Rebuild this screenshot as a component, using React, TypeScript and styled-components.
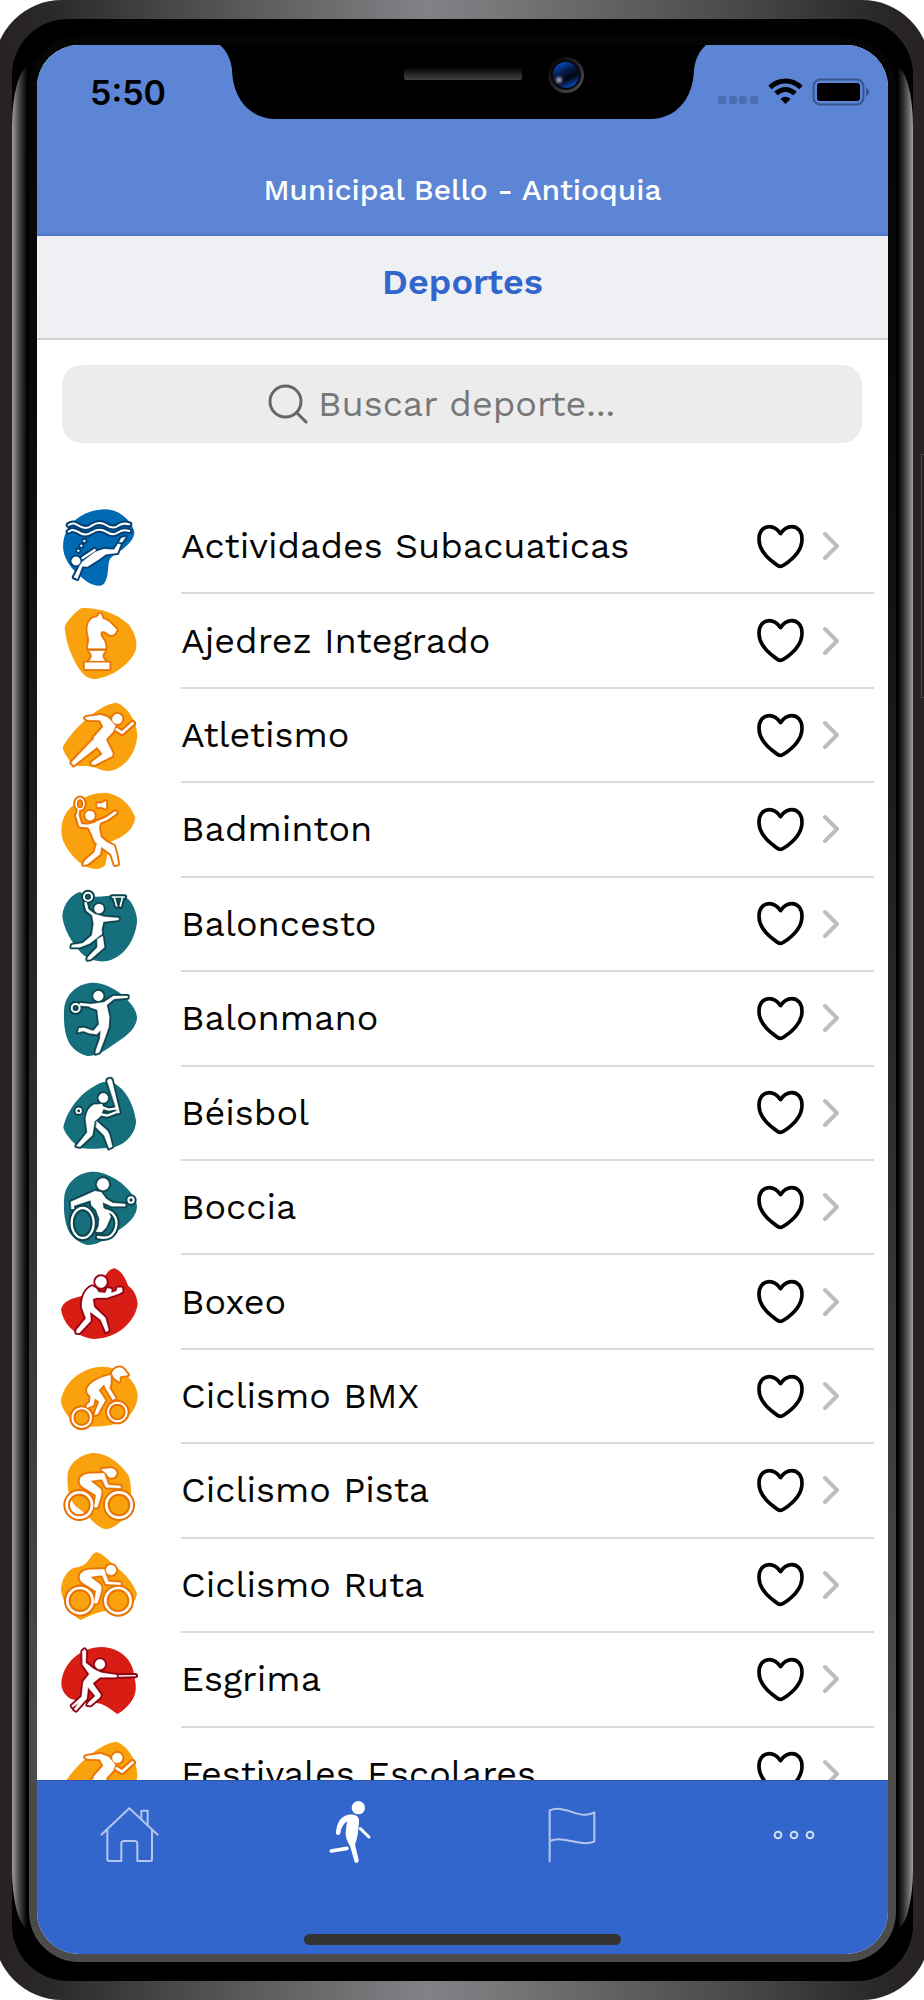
import React from "react";
import styled, { createGlobalStyle } from "styled-components";

const GlobalStyle = createGlobalStyle`
  *, *::before, *::after { box-sizing: border-box; }
  body {
    margin: 0;
    background: #fff;
    font-family: "Work Sans", Inter, "Liberation Sans", sans-serif;
    color: #050505;
  }
`;

/* ---------- Phone shell ---------- */

const Page = styled.div`
  display: flex;
  height: 100vh;
  min-height: 900px;
  overflow: hidden;
`;

const Frame = styled.div`
  position: relative;
  flex: 1;
  display: flex;
  min-width: 0;
  margin: 0 -6px;
  padding: 19px 17px 19px 18px;
  border-radius: 68px;
  background: linear-gradient(
    to right,
    #262223 0%,
    #2b2829 6%,
    #4a4748 19%,
    #5a5a5b 27%,
    #808285 46%,
    #79797c 53%,
    #5a5a5b 70%,
    #4a4748 80%,
    #2b2829 94%,
    #262223 100%
  );
`;

const SideButton = styled.span`
  position: absolute;
  top: 454px;
  right: 0;
  width: 9px;
  height: 244px;
  border: 1px solid #4b4849;
`;

const Bezel = styled.div`
  position: relative;
  flex: 1;
  display: flex;
  min-width: 0;
  padding: 18px 17px 19px;
  border-radius: 56px;
  background: #000;

  &::before,
  &::after {
    content: "";
    position: absolute;
    top: 48px;
    bottom: 52px;
    width: 17px;
  }
  &::before {
    left: 0;
    border-radius: 17px 0 0 17px / 60px 0 0 60px;
    background: linear-gradient(to right, #a0a0a0, #6a6a6a 25%, #333 55%, #000 90%);
  }
  &::after {
    right: 0;
    border-radius: 0 17px 17px 0 / 0 60px 60px 0;
    background: linear-gradient(to left, #a0a0a0, #6a6a6a 25%, #333 55%, #000 90%);
  }
`;

const Rim = styled.div`
  flex: 1;
  display: flex;
  min-width: 0;
  padding: 8px;
  border-radius: 50px;
  background: linear-gradient(#050505, #0a0a0a 20%, #2c2c2c 55%, #4b4b4b 88%);
`;

const Screen = styled.div`
  flex: 1;
  display: flex;
  flex-direction: column;
  min-width: 0;
  overflow: hidden;
  border-radius: 42px;
  background: #fff;
`;

/* ---------- Header ---------- */

const Header = styled.header`
  flex: none;
  background: #5c85d6;
  border-bottom: 2px solid #4f77c8;
`;

const StatusBar = styled.div`
  display: grid;
  grid-template-columns: 1fr auto 1fr;
`;

const Side = styled.div<{ $end?: boolean }>`
  display: flex;
  align-items: center;
  justify-content: ${(p) => (p.$end ? "flex-end" : "flex-start")};
  height: 94px;
  padding: ${(p) => (p.$end ? "0 18px 0 0" : "0 0 0 53px")};
`;

const Clock = styled.time`
  font-family: Inter, "Liberation Sans", sans-serif;
  font-size: 34px;
  font-weight: 600;
  color: #000;
`;

const Place = styled.p`
  margin: 0;
  padding: 33px 0 26px;
  font-size: 30px;
  font-weight: 500;
  line-height: 36px;
  text-align: center;
  color: #fff;
`;

const TitleBar = styled.div`
  flex: none;
  padding: 26px 0 36px;
  background: #eff0f4;
  border-bottom: 2px solid #d0d0d5;
`;

const Title = styled.h1`
  margin: 0;
  font-size: 36px;
  font-weight: 600;
  line-height: 40px;
  text-align: center;
  color: #3366cc;
`;

/* ---------- Search ---------- */

const SearchBox = styled.label`
  flex: none;
  display: flex;
  align-items: center;
  justify-content: center;
  gap: 10px;
  height: 78px;
  margin: 25px 26px 57px 25px;
  border-radius: 20px;
  background: #ececec;
`;

const SearchInput = styled.input`
  width: 338px;
  padding: 0;
  border: 0;
  outline: 0;
  background: transparent;
  font: inherit;
  font-size: 36px;
  line-height: 44px;
  color: #050505;

  &::placeholder {
    color: #777;
    opacity: 1;
  }
`;

/* ---------- List ---------- */

const Scroller = styled.main`
  flex: 1;
  min-height: 0;
  overflow: hidden;
`;

const List = styled.ul`
  display: grid;
  grid-auto-rows: 1fr;
  height: 1322px;
  margin: 0;
  padding: 0 14px 0 23px;
  list-style: none;
`;

const Row = styled.li`
  display: flex;
  align-items: center;
  gap: 41px;
`;

const RowBody = styled.div`
  flex: 1;
  display: flex;
  align-items: center;
  gap: 17px;
  height: 100%;
  padding-right: 35px;
  border-bottom: 2px solid #dadadd;
`;

const SportLink = styled.a`
  flex: 1;
  font-size: 36px;
  line-height: 44px;
  color: inherit;
  text-decoration: none;
`;

const LikeButton = styled.button`
  display: flex;
  padding: 0;
  border: 0;
  background: none;
  cursor: pointer;
`;

/* ---------- Tab bar ---------- */

const TabBar = styled.nav`
  flex: none;
  display: flex;
  flex-direction: column;
  align-items: center;
  justify-content: space-between;
  height: 174px;
  padding: 19px 0 9px;
  background: #3366cc;
  border-top: 1px solid #2b55a8;
`;

const Tabs = styled.div`
  align-self: stretch;
  display: flex;
  justify-content: space-between;
  padding: 0 62px 0 60px;
`;

const Tab = styled.a`
  display: flex;
`;

const HomeIndicator = styled.span`
  width: 317px;
  height: 11px;
  border-radius: 6px;
  background: #333;
`;

/* ---------- Sport pictograms ---------- */

type Shape = { d: string; w?: number };

type Palette = "blue" | "amber" | "teal" | "red";

const palettes: Record<Palette, { blob: string; edge: string }> = {
  blue: { blob: "#0069b4", edge: "#003f74" },
  amber: { blob: "#f9a20d", edge: "#e87200" },
  teal: { blob: "#166f7c", edge: "#0b434e" },
  red: { blob: "#d81e14", edge: "#930012" },
};

const oval = (x: number, y: number, rx: number, ry = rx) =>
  `M${x - rx} ${y}a${rx} ${ry} 0 1 0 ${rx * 2} 0a${rx} ${ry} 0 1 0 ${-rx * 2} 0Z`;

type Sport = {
  name: string;
  tone: Palette;
  top: number;
  blob: string;
  figure: Shape[];
};

const runner = {
  tone: "amber" as Palette,
  top: 646,
  blob: "M350 666C385 680 412 725 412 765C408 820 370 868 325 871C300 871 290 858 260 856C230 858 215 852 205 835C192 815 186 805 190 795C215 755 250 720 285 695C310 675 335 667 350 666Z",
  figure: [
    { d: oval(352, 715, 15) },
    { d: "M255 712L260 709L302 703L325 711L346 735L340 752L318 776L322 786L338 818L336 826L285 852L274 851L276 844L308 820L290 797L280 786L282 770L310 738L300 719L262 717Z" },
    { d: "M350 746L366 756L398 728", w: 8 },
    { d: "M278 778L214 846L221 854L290 800Z" },
  ],
};

const sports: Sport[] = [
  {
    name: "Actividades Subacuaticas",
    tone: "blue",
    top: 80,
    blob: "M318 87C350 87 388 112 401 148C408 165 395 185 370 205C345 222 328 228 326 250C322 275 325 290 312 310C300 322 275 315 255 300C230 280 195 250 190 210C186 175 200 140 225 120C250 98 285 87 318 87Z",
    figure: [
      { d: "M206 134C220 124 228 132 240 138C255 146 265 144 275 136C290 126 305 126 318 134C330 142 345 144 355 136C365 129 378 129 388 132", w: 6 },
      { d: "M206 154C220 144 228 152 240 158C255 166 265 164 275 156C290 146 305 146 318 154C330 162 345 164 355 156C365 149 378 149 388 152", w: 6 },
      { d: oval(228, 242, 13) },
      { d: oval(235, 211, 3) },
      { d: oval(244, 196, 3) },
      { d: oval(253, 182, 3) },
      { d: "M247 244L285 215L312 206L342 208L354 190L362 192L352 218L318 222L295 238L262 259L247 258L232 296L226 292L238 258Z" },
      { d: "M248 233L284 209", w: 7 },
      { d: "M224 290L238 264", w: 5 },
      { d: "M358 184L364 173L377 170L366 186Z" },
    ],
  },
  {
    name: "Ajedrez Integrado",
    tone: "amber",
    top: 363,
    blob: "M248 380C300 382 350 395 385 430C405 455 412 480 408 505C395 550 330 590 288 594C262 594 250 582 235 560C210 520 198 480 194 440C194 425 235 382 248 380Z",
    figure: [
      { d: "M303 400L308 414C325 417 337 432 350 446L345 456C338 464 330 462 325 458L312 450C298 450 298 462 311 478C317 488 316 495 316 502L264 502C264 490 269 485 267 470C260 445 262 425 275 414C283 409 295 412 297 400Z" },
      { d: "M268 510H315C305 520 305 530 315 539H268C278 530 278 520 268 510Z" },
      { d: "M255 545H328V564H255Z" },
    ],
  },
  { name: "Atletismo", ...runner },
  {
    name: "Badminton",
    tone: "amber",
    top: 929,
    blob: "M318 937C350 940 390 965 406 1012C400 1050 370 1070 330 1085C320 1100 325 1125 315 1155C300 1172 275 1168 250 1155C215 1130 185 1090 184 1055C184 1020 195 995 220 975C250 945 290 937 318 937Z",
    figure: [
      { d: oval(240, 970, 12, 16), w: 5 },
      { d: "M236 988L232 1008", w: 5 },
      { d: "M232 1005L241 1035L272 1038", w: 8 },
      { d: oval(270, 1006, 14) },
      { d: "M290 1027L320 1015L346 997", w: 8 },
      { d: "M262 1034L300 1023L297 1045L302 1070L318 1084L342 1096L350 1125L354 1152L344 1154L334 1122L308 1102L285 1085L275 1060Z" },
      { d: "M290 1092L304 1096L300 1122L262 1152L250 1153L254 1142L284 1115Z" },
      { d: "M292 969L303 970L318 962V985L304 979L293 980Z" },
    ],
  },
  {
    name: "Baloncesto",
    tone: "teal",
    top: 43,
    blob: "M240 64C265 80 290 80 320 76C345 72 370 72 388 88C405 110 412 135 411 155C405 210 370 265 315 272C275 275 245 255 230 230C205 200 188 160 187 135C190 100 215 70 240 64Z",
    figure: [
      { d: oval(264, 78, 12), w: 6 },
      { d: "M257 98L262 118L280 132", w: 8 },
      { d: oval(297, 114, 14) },
      { d: "M276 128L312 138L356 142V148L310 153L305 175L306 190L270 218L240 230L214 230L216 223L248 218L276 194L281 160Z" },
      { d: "M292 206L308 196L313 230L272 266L262 267L264 259L292 230Z" },
      { d: "M337 79H373", w: 5 },
      { d: "M343 82L350 106", w: 5 },
      { d: "M367 82L361 106", w: 5 },
    ],
  },
  {
    name: "Balonmano",
    tone: "teal",
    top: 326,
    blob: "M280 337C310 338 340 352 365 372C390 395 412 420 411 445C405 485 365 505 330 530C310 545 285 558 262 557C235 550 210 530 202 505C192 480 190 440 193 410C200 365 240 337 280 337Z",
    figure: [
      { d: oval(227, 413, 12), w: 6 },
      { d: "M242 402L275 405", w: 8 },
      { d: oval(295, 377, 15) },
      { d: "M270 402L312 396L340 377L383 377V382L342 386L320 404L328 440L326 470L312 510L298 546L287 550L287 542L300 505L302 480L290 492L268 489L250 482L234 486L237 474L252 472L280 482L297 462L292 418L270 411Z" },
    ],
  },
  {
    name: "Béisbol",
    tone: "teal",
    top: 610,
    blob: "M325 633C365 638 400 690 408 750C408 790 375 822 340 830C300 835 265 836 240 832C215 815 192 785 190 770C200 720 240 670 280 648C295 638 310 632 325 633Z",
    figure: [
      { d: oval(236, 720, 7), w: 5 },
      { d: oval(310, 682, 14) },
      { d: "M322 632C322 623 334 622 336 630L359 726L353 728Z" },
      { d: "M302 708L325 717L350 713", w: 7 },
      { d: "M298 730L322 735L350 724", w: 7 },
      { d: "M282 702L306 700L310 716L300 738L284 752L277 794L240 828L229 826L262 785L257 745C260 722 268 708 282 702Z" },
      { d: "M290 752L322 780L328 792L337 828L327 833L313 795L288 770Z" },
    ],
  },
  {
    name: "Boccia",
    tone: "teal",
    top: 893,
    blob: "M280 904C310 905 340 919 365 939C390 962 412 987 411 1012C405 1052 365 1072 330 1097C310 1112 285 1125 262 1124C235 1117 210 1097 202 1072C192 1047 190 1007 193 977C200 932 240 904 280 904Z",
    figure: [
      { d: oval(248, 1058, 33, 45), w: 7 },
      { d: "M312 1020C340 1020 352 1045 349 1065C344 1095 325 1108 294 1100", w: 7 },
      { d: oval(309, 942, 18) },
      { d: "M213 994L285 962L304 966L318 985L338 998L376 1001V1008L335 1008L308 996L310 1012L326 1025L332 1040L318 1072L305 1085L288 1084L296 1068L298 1045L288 1018L274 1005L272 990L222 1006L222 1016L214 1016Z" },
      { d: oval(393, 989, 8), w: 6 },
    ],
  },
  {
    name: "Boxeo",
    tone: "red",
    top: 36,
    blob: "M342 52C365 58 375 80 385 105C400 115 412 135 413 160C405 215 350 262 285 264C235 262 190 225 183 175C190 150 215 142 245 135C275 120 300 90 315 75C322 62 332 54 342 52Z",
    figure: [
      { d: oval(303, 93, 17) },
      { d: "M276 106L288 112L296 124L316 126L322 112L334 114L334 126L350 120L352 110L366 110L367 122L356 128L320 140L290 140L278 144L282 168L316 200L326 238L318 243L302 206L270 182L272 210L238 246L229 245L230 236L258 202L246 170C244 140 256 114 276 106Z" },
    ],
  },
  {
    name: "Ciclismo BMX",
    tone: "amber",
    top: 320,
    blob: "M305 349C360 348 410 390 413 435C412 480 380 515 330 525C290 532 240 532 215 510C195 490 182 465 183 450C190 400 240 352 305 349Z",
    figure: [
      { d: oval(245, 502, 28), w: 6 },
      { d: oval(352, 485, 28), w: 6 },
      { d: "M336 370C340 352 362 346 372 358L384 374L360 378L358 394L342 382Z" },
      { d: "M262 418C264 400 300 380 332 375L332 398L328 414L347 444L338 448L318 415L312 402L296 420L316 450L292 492L284 494L286 484L298 454L284 444L280 464L262 472L260 465L270 456L272 436C264 432 261 426 262 418Z" },
    ],
  },
  {
    name: "Ciclismo Pista",
    tone: "amber",
    top: 603,
    blob: "M285 609C325 612 360 640 385 675C395 700 392 730 395 760C385 800 355 830 320 838C290 835 270 800 235 775C205 755 200 710 203 670C210 635 250 608 285 609Z",
    figure: [
      { d: oval(238, 765, 38), w: 8 },
      { d: oval(357, 765, 38), w: 8 },
      { d: "M304 658L332 655C345 656 352 665 348 675C340 687 325 685 320 672Z" },
      { d: "M240 700C236 680 250 672 270 671L312 670L325 705L362 708V714L318 712L306 688L270 692L300 715C306 722 304 730 302 740L292 772L283 772L288 735L245 708Z" },
    ],
  },
  {
    name: "Ciclismo Ruta",
    tone: "amber",
    top: 886,
    blob: "M290 905C310 910 320 925 345 945C375 970 400 995 411 1030C405 1065 375 1080 340 1078C300 1080 270 1095 242 1108C215 1095 185 1050 183 1015C185 985 200 962 220 952C245 950 260 940 270 922C278 910 285 905 290 905Z",
    figure: [
      { d: oval(240, 1050, 38), w: 8 },
      { d: oval(354, 1050, 38), w: 8 },
      { d: oval(333, 958, 15) },
      { d: "M240 986C236 968 250 958 270 957L312 956L325 993L362 996V1002L318 1000L306 974L270 978L300 1001C306 1008 304 1016 302 1026L292 1058L283 1058L288 1021L245 994Z" },
    ],
  },
  {
    name: "Esgrima",
    tone: "red",
    top: 0,
    blob: "M305 21C360 22 400 60 403 110C410 140 408 155 402 170C390 195 370 212 352 222C335 212 320 195 295 190C265 185 240 185 215 178C195 168 184 150 184 130C188 70 240 22 305 21Z",
    figure: [
      { d: oval(300, 73, 15) },
      { d: "M247 34L254 28L258 34L257 68L282 88L304 98L350 105V112L300 112L278 130L302 164L300 172L272 196L262 195L265 188L286 168L264 142L260 176L228 212L222 208L236 188L218 202L215 197L245 170L250 125L268 102L248 74Z" },
      { d: "M357 108L406 107", w: 4 },
    ],
  },
  { name: "Festivales Escolares", ...runner },
];

function SportIcon({ sport }: { sport: Sport }) {
  const { blob, edge } = palettes[sport.tone];
  return (
    <svg width="80" height="80" viewBox={`180 ${sport.top} 240 240`} aria-hidden="true">
      <path d={sport.blob} fill={blob} />
      <g stroke={edge} strokeLinejoin="round" strokeLinecap="round">
        {sport.figure.map((s, i) => (
          <path key={i} d={s.d} fill={s.w ? "none" : edge} strokeWidth={(s.w ?? 0) + 12} />
        ))}
      </g>
      <g stroke="#fff" strokeLinejoin="round" strokeLinecap="round">
        {sport.figure.map((s, i) => (
          <path key={i} d={s.d} fill={s.w ? "none" : "#fff"} strokeWidth={s.w ?? 1} />
        ))}
      </g>
    </svg>
  );
}

/* ---------- Interface icons ---------- */

const Notch = () => (
  <svg width="486" height="76" viewBox="219 45 486 76" aria-hidden="true">
    <defs>
      <linearGradient id="speaker" x1="0" y1="0" x2="0" y2="1">
        <stop offset="0" stopColor="#000" />
        <stop offset="1" stopColor="#424242" />
      </linearGradient>
      <linearGradient id="lensRing" x1="0" y1="0" x2="1" y2="1">
        <stop offset="0.2" stopColor="#0c0c0c" />
        <stop offset="1" stopColor="#555" />
      </linearGradient>
      <linearGradient id="lens" x1="0.1" y1="0" x2="0.6" y2="1">
        <stop offset="0" stopColor="#0a5cf0" />
        <stop offset="0.4" stopColor="#05204f" />
        <stop offset="0.7" stopColor="#02060f" />
        <stop offset="1" stopColor="#0848b8" />
      </linearGradient>
      <radialGradient id="glint">
        <stop offset="0" stopColor="#a9b4c8" />
        <stop offset="1" stopColor="#a9b4c8" stopOpacity="0" />
      </radialGradient>
    </defs>
    <path d="M219 45C226 51 230 60 231 70C232 100 250 119 275 119H649C674 119 692 100 693 70C694 60 698 51 705 45Z" fill="#000" />
    <rect x="403" y="67" width="118" height="13" rx="2" fill="url(#speaker)" />
    <circle cx="565" cy="75" r="18" fill="url(#lensRing)" />
    <circle cx="565" cy="75" r="15" fill="#080808" />
    <circle cx="565" cy="75" r="13" fill="url(#lens)" />
    <circle cx="558" cy="80" r="5" fill="url(#glint)" />
  </svg>
);

const StatusIcons = () => (
  <svg width="152" height="28" viewBox="0 0 152 28" role="img" aria-label="Wi-Fi y batería">
    <g fill="#4c6db0">
      <rect x="0" y="18" width="8" height="8" rx="2" />
      <rect x="11" y="18" width="8" height="8" rx="2" />
      <rect x="21" y="18" width="8" height="8" rx="2" />
      <rect x="32" y="18" width="8" height="8" rx="2" />
    </g>
    <g fill="none" stroke="#000" strokeWidth="5">
      <path d="M52 9.500C61 .8 74 .8 83 9.500" />
      <path d="M58 15.500C64 10 71 10 77 15.500" />
    </g>
    <path d="M67.500 26L62.500 21C65.500 18 69.500 18 72.500 21Z" fill="#000" />
    <rect x="95.500" y="1.500" width="50" height="25" rx="7" fill="none" stroke="#385590" strokeWidth="2" />
    <rect x="99" y="5" width="43" height="18" rx="3" fill="#000" />
    <path d="M148 10C152 11 152 17 148 18Z" fill="#385590" />
  </svg>
);

const SearchIcon = () => (
  <svg width="40" height="40" viewBox="0 0 40 40" fill="none" stroke="#666" strokeWidth="3" strokeLinecap="round" aria-hidden="true">
    <circle cx="17.500" cy="17.500" r="15.500" />
    <path d="M28.500 28.500L38 38" />
  </svg>
);

const HeartIcon = () => (
  <svg width="49" height="45" viewBox="168 250 146 136" fill="none" stroke="#000" strokeWidth="11" strokeLinejoin="round" aria-hidden="true">
    <path d="M241 279C232 266 221 258 207 258C188 258 176 274 176 296C176 328 200 354 232 375Q241 381 250 375C282 354 306 328 306 296C306 274 294 258 275 258C261 258 250 266 241 279Z" />
  </svg>
);

const ChevronIcon = () => (
  <svg width="17" height="30" viewBox="0 0 17 30" fill="none" stroke="#bdbdbd" strokeWidth="4" strokeLinecap="round" strokeLinejoin="round" aria-hidden="true">
    <path d="M3 3L15 15L3 27" />
  </svg>
);

const HomeIcon = () => (
  <svg width="64" height="64" viewBox="290 480 192 192" fill="none" stroke="#b3c6ec" strokeWidth="6" strokeLinecap="round" strokeLinejoin="round" aria-hidden="true">
    <path d="M303 584L387 505L472 584" />
    <path d="M321 570V658Q321 663 326 663H363V611Q363 603 371 603H403Q411 603 411 611V663H450Q455 663 455 658V570" />
    <path d="M423 536V512H442V554" />
  </svg>
);

const RunIcon = () => (
  <svg width="64" height="64" viewBox="954 486 192 192" fill="#fff" stroke="#fff" strokeLinecap="round" aria-hidden="true">
    <circle cx="1072" cy="509" r="20" stroke="none" />
    <path stroke="none" d="M1042 530C1060 527 1076 534 1074 550C1072 580 1070 600 1062 620L1073 665C1075 675 1062 679 1060 669L1048 626C1036 605 1032 595 1035 575L1038 550C1025 560 1020 572 1018 585C1016 594 1005 592 1005 584C1007 560 1015 535 1042 530Z" />
    <path d="M1078 572L1104 597" strokeWidth="9" />
    <path d="M991 639L1038 631" strokeWidth="11" />
  </svg>
);

const FlagIcon = () => (
  <svg width="64" height="64" viewBox="238 480 192 192" fill="none" stroke="#b3c6ec" strokeWidth="6" strokeLinecap="round" strokeLinejoin="round" aria-hidden="true">
    <path d="M267 664V511C310 495 345 528 375 524Q390 523 401 517V605C360 622 310 585 267 603" />
  </svg>
);

const MoreIcon = () => (
  <svg width="64" height="64" viewBox="900 480 192 192" fill="none" stroke="#d3def4" strokeWidth="6" aria-hidden="true">
    <circle cx="948" cy="585" r="10" />
    <circle cx="996" cy="585" r="10" />
    <circle cx="1044" cy="585" r="10" />
  </svg>
);

export default function App() {
  return (
    <Page>
      <GlobalStyle />
      <Frame>
        <SideButton />
        <Bezel>
          <Rim>
            <Screen>
              <Header>
                <StatusBar>
                  <Side>
                    <Clock>5:50</Clock>
                  </Side>
                  <Notch />
                  <Side $end>
                    <StatusIcons />
                  </Side>
                </StatusBar>
                <Place>Municipal Bello - Antioquia</Place>
              </Header>
              <TitleBar>
                <Title>Deportes</Title>
              </TitleBar>
              <SearchBox>
                <SearchIcon />
                <SearchInput type="text" placeholder="Buscar deporte..." aria-label="Buscar deporte" />
              </SearchBox>
              <Scroller>
                <List>
                  {sports.map((sport) => (
                    <Row key={sport.name}>
                      <SportIcon sport={sport} />
                      <RowBody>
                        <SportLink href="#">{sport.name}</SportLink>
                        <LikeButton type="button" aria-label={`Favorito: ${sport.name}`}>
                          <HeartIcon />
                        </LikeButton>
                        <ChevronIcon />
                      </RowBody>
                    </Row>
                  ))}
                </List>
              </Scroller>
              <TabBar>
                <Tabs>
                  <Tab href="#" aria-label="Inicio"><HomeIcon /></Tab>
                  <Tab href="#" aria-label="Deportes" aria-current="page"><RunIcon /></Tab>
                  <Tab href="#" aria-label="Eventos"><FlagIcon /></Tab>
                  <Tab href="#" aria-label="Más"><MoreIcon /></Tab>
                </Tabs>
                <HomeIndicator />
              </TabBar>
            </Screen>
          </Rim>
        </Bezel>
      </Frame>
    </Page>
  );
}
